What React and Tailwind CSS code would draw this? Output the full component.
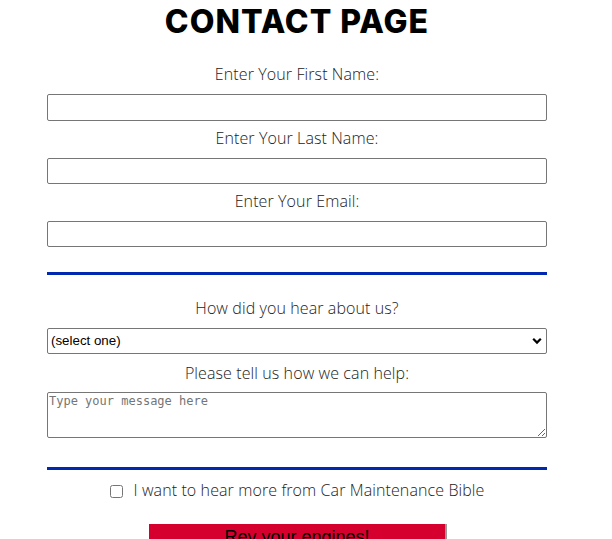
import React from "react";

const label = "block text-center text-[16px] tracking-[0.1px] leading-5 h-5 text-[#222] font-light font-['Open_Sans',sans-serif]";
const input = "block w-full h-[26px] border border-[#767676] rounded-[2px] bg-white";

export default function App() {
  return (
    <div className="w-[594px] bg-white min-h-[539px]">
      <h1 className="text-center text-[32px] leading-[44px] font-extrabold tracking-[1px] text-black font-['Inter',sans-serif] pt-0">
        CONTACT PAGE
      </h1>
      <form className="w-[500px] mx-auto flex flex-col">
        <label className={`${label} mt-[20px] mb-[10px]`}>Enter Your First Name:</label>
        <input type="text" className={`${input} h-[27px]`} />
        <label className={`${label} mt-[7px] mb-[10px]`}>Enter Your Last Name:</label>
        <input type="text" className={input} />
        <label className={`${label} mt-[7px] mb-[10px]`}>Enter Your Email:</label>
        <input type="email" className={input} />
        <div className="h-[3px] bg-[#0029b0] mt-[25px]" />
        <label className={`${label} mt-[23px] mb-[10px]`}>How did you hear about us?</label>
        <div className="relative">
          <select className="block w-full h-[26px] border border-[#767676] rounded-[2px] bg-white appearance-none pl-[3px] text-[13.33px] text-black font-['Liberation_Sans',Arial,sans-serif]">
            <option>(select one)</option>
          </select>
          <svg className="absolute right-[5px] top-[9px] pointer-events-none" width="10" height="8" viewBox="0 0 10 8">
            <path d="M1.2 1.8 L5 5.6 L8.8 1.8" fill="none" stroke="#000" strokeWidth="2.2" />
          </svg>
        </div>
        <label className={`${label} mt-[9px] mb-[9px]`}>Please tell us how we can help:</label>
        <textarea
          placeholder="Type your message here"
          className="block w-full h-[46px] border border-[#767676] rounded-[2px] bg-white px-[1px] py-[1px] text-[12px] leading-[15px] font-['DejaVu_Sans_Mono',monospace] placeholder:text-[#757575]"
        />
        <div className="h-[3px] bg-[#0029b0] mt-[29px]" />
        <div className="flex items-center justify-center mt-[10px] h-5">
          <input type="checkbox" className="w-[13px] h-[13px] m-0 mr-[11px] mt-[2px]" />
          <span className="text-[16px] tracking-[0.1px] leading-5 text-[#222] font-light font-['Open_Sans',sans-serif]">
            I want to hear more from Car Maintenance Bible
          </span>
        </div>
        <div className="flex justify-center mt-[24px]">
          <button type="button" className="w-[298px] h-[40px] bg-[#d6002f] border-r-2 border-[#9a9a9a] text-black text-[18px] leading-[24px] pt-[1px] font-['Liberation_Sans',Arial,sans-serif] flex justify-center items-start ml-[2px]">
            Rev your engines!
          </button>
        </div>
      </form>
    </div>
  );
}
